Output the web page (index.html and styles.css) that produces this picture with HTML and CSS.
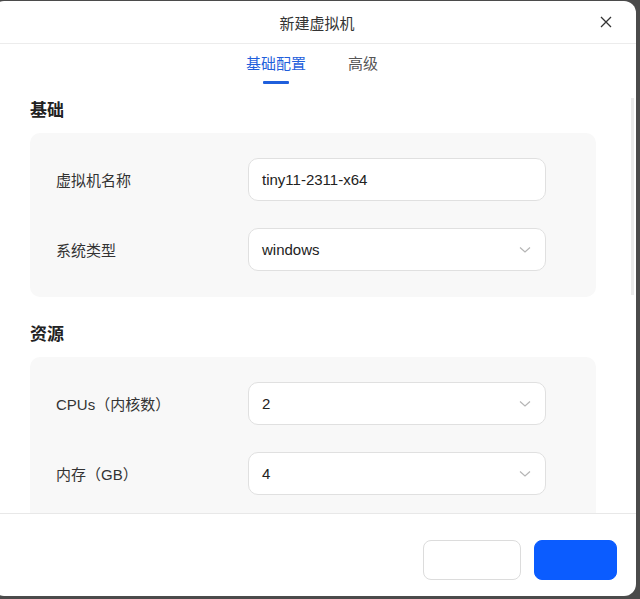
FILE: index.html
```html
<!DOCTYPE html>
<html lang="zh-CN">
    <head>
        <meta charset="UTF-8">
        <meta name="viewport" content="width=device-width, initial-scale=1.0">
        <title>新建虚拟机</title>
        <link rel="stylesheet" href="styles.css">
    </head>

    <body>
        <div class="dialog">
            <header class="dialog-header">
                <h1>新建虚拟机</h1>
                <button class="close-btn" aria-label="关闭">
                    <svg width="12" height="12" viewBox="0 0 12 12">
                        <path d="M1 1 L11 11 M11 1 L1 11" stroke="#333" stroke-width="1.3" fill="none"/>
                    </svg>
                </button>
            </header>

            <nav class="tabs">
                <div class="tab active">基础配置</div>
                <div class="tab">高级</div>
            </nav>

            <div class="dialog-body">
                <div class="body-inner">
                    <h2 class="section-title">基础</h2>
                    <div class="card">
                        <div class="form-row">
                            <label>虚拟机名称</label>
                            <div class="field">tiny11-2311-x64</div>
                        </div>
                        <div class="form-row">
                            <label>系统类型</label>
                            <div class="field select">
                                <span>windows</span>
                                <svg class="chevron" width="12" height="8" viewBox="0 0 12 8">
                                    <path d="M1 1.5 L6 6 L11 1.5" stroke="#b5b5b5" stroke-width="1.2" fill="none"/>
                                </svg>
                            </div>
                        </div>
                    </div>

                    <h2 class="section-title">资源</h2>
                    <div class="card">
                        <div class="form-row">
                            <label>CPUs（内核数）</label>
                            <div class="field select">
                                <span>2</span>
                                <svg class="chevron" width="12" height="8" viewBox="0 0 12 8">
                                    <path d="M1 1.5 L6 6 L11 1.5" stroke="#b5b5b5" stroke-width="1.2" fill="none"/>
                                </svg>
                            </div>
                        </div>
                        <div class="form-row">
                            <label>内存（GB）</label>
                            <div class="field select">
                                <span>4</span>
                                <svg class="chevron" width="12" height="8" viewBox="0 0 12 8">
                                    <path d="M1 1.5 L6 6 L11 1.5" stroke="#b5b5b5" stroke-width="1.2" fill="none"/>
                                </svg>
                            </div>
                        </div>
                    </div>
                </div>
            </div>
            <!-- scroll thumb of the body -->
            <div class="scroll-thumb"></div>

            <footer class="dialog-footer">
                <button class="btn btn-cancel"></button>
                <button class="btn btn-primary"></button>
            </footer>
        </div>
    </body>
</html>
```

FILE: styles.css
```css
html,
body {
    margin: 0;
    padding: 0;
    height: 599px;
    overflow: hidden;
}

body {
    background-color: #4b4b4b;
    font-family: "Liberation Sans", "Noto Sans CJK SC", sans-serif;
    color: #333;
}

.dialog {
    width: 644px;
    height: 595px;
    margin: 1px 0 0 -8px;
    background-color: #fff;
    border-radius: 12px;
    display: flex;
    flex-direction: column;
    overflow: hidden;
    position: relative;
}

.dialog-header {
    height: 42px;
    border-bottom: 1px solid #ececec;
    display: flex;
    align-items: center;
    justify-content: center;
    position: relative;
}

.dialog-header h1 {
    margin: 0;
    font-size: 15px;
    font-weight: normal;
    color: #333;
    padding-left: 6px;
}

.close-btn {
    position: absolute;
    right: 24px;
    top: 15px;
    border: none;
    background: none;
    padding: 0;
    width: 12px;
    height: 12px;
    display: flex;
}

.tabs {
    height: 46px;
    display: flex;
    justify-content: center;
    gap: 42px;
    padding-right: 4px;
    box-sizing: border-box;
}

.tab {
    font-size: 15px;
    line-height: 20px;
    padding-top: 10px;
    color: #555;
    display: flex;
    flex-direction: column;
    align-items: center;
}

.tab.active {
    color: #1f5fdc;
}

.tab.active::after {
    content: "";
    display: block;
    width: 26px;
    height: 3px;
    margin-top: 7px;
    background-color: #1f5fdc;
    border-radius: 1px;
}

.dialog-body {
    flex: 1;
    overflow-y: auto;
    scrollbar-width: none;
    padding-left: 38px;
    padding-right: 40px;
}

.dialog-body::-webkit-scrollbar {
    display: none;
}

.scroll-thumb {
    position: absolute;
    left: 639px;
    top: 97px;
    width: 3px;
    height: 197px;
    background-color: #ebebeb;
}

.body-inner {
    min-height: 870px;
    padding-top: 9px;
}

.section-title {
    margin: 0 0 10px;
    font-size: 17px;
    line-height: 24px;
    font-weight: bold;
    color: #222;
}

.card {
    background-color: #f8f8f8;
    border-radius: 10px;
    padding: 25px 50px 26px 26px;
    display: flex;
    flex-direction: column;
    gap: 27px;
    margin-bottom: 26px;
}

.form-row {
    display: grid;
    grid-template-columns: 192px 298px;
    align-items: center;
}

.form-row label {
    font-size: 15px;
    color: #333;
}

.field {
    height: 43px;
    box-sizing: border-box;
    border: 1px solid #e0e0e0;
    border-radius: 10px;
    background-color: #fff;
    padding: 0 14px 0 13px;
    display: flex;
    align-items: center;
    justify-content: space-between;
    font-size: 15px;
    color: #222;
}

.dialog-footer {
    height: 83px;
    border-top: 1px solid #e8e8e8;
    display: flex;
    justify-content: flex-end;
    align-items: flex-start;
    gap: 13px;
    padding: 26px 19px 0 0;
    box-sizing: border-box;
}

.btn {
    height: 40px;
    border-radius: 8px;
    padding: 0;
}

.btn-cancel {
    width: 98px;
    background-color: #fff;
    border: 1px solid #dcdcdc;
}

.btn-primary {
    width: 83px;
    background-color: #0b5cff;
    border: 1px solid #0b5cff;
}
```
